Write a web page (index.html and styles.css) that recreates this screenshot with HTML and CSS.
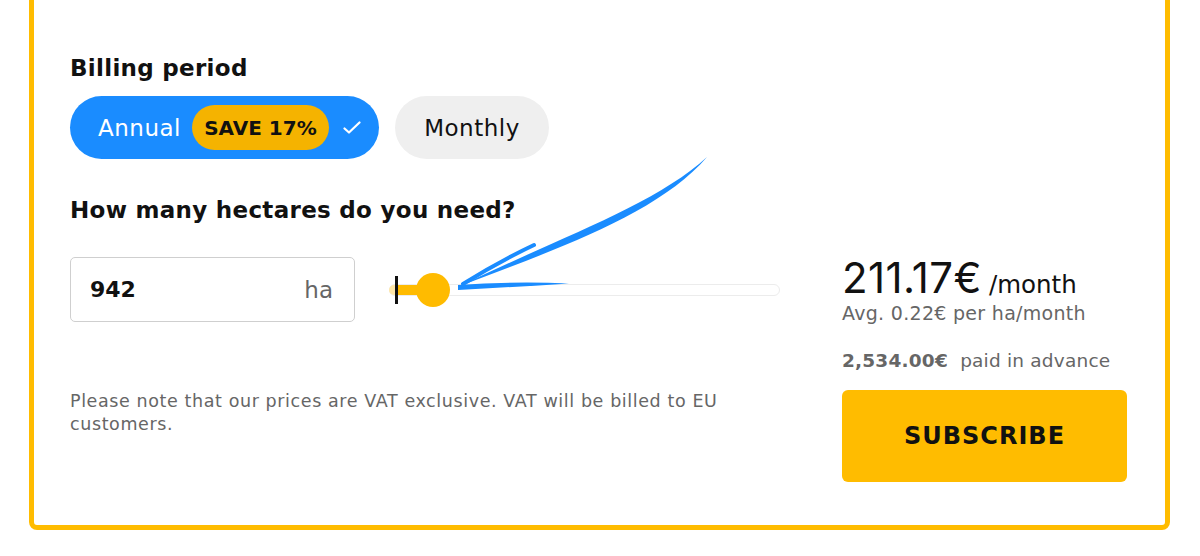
FILE: index.html
```html
<!DOCTYPE html>
<html lang="en">
<head>
<meta charset="utf-8">
<title>Pricing</title>
<link rel="stylesheet" href="styles.css">
</head>
<body>
<div class="card">
  <div class="top">
    <h2 class="heading">Billing period</h2>
    <div class="pills">
      <button class="pill pill-active">
        <span class="pill-label">Annual</span>
        <span class="badge">SAVE 17%</span>
        <svg class="check" width="18" height="14" viewBox="0 0 18 14"><path d="M1.5 7.5 L6 11.5 L16.5 1.5" fill="none" stroke="#fff" stroke-width="2.2" stroke-linecap="round" stroke-linejoin="round"/></svg>
      </button>
      <button class="pill pill-plain"><span class="pill-label">Monthly</span></button>
    </div>
    <h2 class="heading heading-2">How many hectares do you need?</h2>
  </div>
  <div class="main">
    <div class="left">
      <div class="input-row">
        <div class="ha-input">
          <span class="ha-value">942</span>
          <span class="ha-unit">ha</span>
        </div>
        <div class="slider">
          <div class="track"></div>
          <div class="fill-light"></div>
          <div class="fill"></div>
          <div class="marker"></div>
          <div class="thumb"></div>
        </div>
      </div>
      <p class="note">Please note that our prices are VAT exclusive. VAT will be billed to EU customers.</p>
    </div>
    <div class="right">
      <div class="price"><span class="amount">211.17€</span><span class="per">/month</span></div>
      <div class="avg">Avg. 0.22€ per ha/month</div>
      <div class="advance"><strong>2,534.00€</strong>&nbsp; paid in advance</div>
      <button class="subscribe">SUBSCRIBE</button>
    </div>
  </div>
  <svg class="arrow" viewBox="29 -20 1141 550" width="1141" height="550">
    <path d="M707,157 C654,206 553,240 460,286 C557,249 658,214 707,157 Z" fill="#1a8cff"/>
    <path d="M534,245 Q498,262 463,284" fill="none" stroke="#1a8cff" stroke-width="4" stroke-linecap="round"/>
    <path d="M458,285 Q515,281 569,283.5 Q515,287 458,290 Z" fill="#1a8cff"/>
  </svg>
</div>
</body>
</html>
```

FILE: styles.css
```css
* { box-sizing: border-box; }
html, body { margin: 0; padding: 0; background: #fff; }
body {
  font-family: "DejaVu Sans", Inter, sans-serif;
  color: #111;
  width: 1200px;
  height: 556px;
  overflow: hidden;
}
.card {
  position: relative;
  margin: -20px 0 0 29px;
  width: 1141px;
  height: 550px;
  border: 5px solid #ffbc00;
  border-radius: 8px;
  padding: 69px 38px 0 36px;
}
.heading {
  margin: 0;
  font-size: 23px;
  line-height: 28px;
  font-weight: 700;
  letter-spacing: 0.3px;
  color: #111;
}
.heading-2 { margin-top: 37px; }
.pills {
  display: flex;
  gap: 16px;
  margin-top: 14px;
}
.pill {
  display: flex;
  align-items: center;
  height: 63px;
  border: none;
  border-radius: 32px;
  font-family: inherit;
  font-size: 23px;
  padding: 0 29px;
  cursor: pointer;
}
.pill-active {
  background: #1a8cff;
  color: #fff;
  padding: 0 16px 0 28px;
  width: 309px;
}
.pill-plain {
  background: #efefef;
  color: #111;
  width: 154px;
  justify-content: center;
  padding: 0;
}
.pill-label { letter-spacing: 0.5px; }
.badge {
  display: flex;
  align-items: center;
  justify-content: center;
  margin-left: 11px;
  width: 137px;
  height: 45px;
  border-radius: 23px;
  background: #f5b300;
  color: #111;
  font-weight: 700;
  font-size: 20px;
}
.check { margin-left: 14px; }
.main {
  display: grid;
  grid-template-columns: 1fr 285px;
  column-gap: 60px;
  margin-top: 33px;
}
.input-row {
  display: flex;
  align-items: center;
  gap: 34px;
}
.ha-input {
  display: flex;
  align-items: center;
  justify-content: space-between;
  width: 285px;
  height: 65px;
  border: 1.5px solid #cfcfcf;
  border-radius: 5px;
  padding: 0 21px 0 19px;
}
.ha-value { font-size: 22px; font-weight: 700; }
.ha-unit { font-size: 23px; color: #666; }
.slider {
  position: relative;
  width: 391px;
  height: 34px;
}
.track {
  position: absolute;
  left: 0; right: 0; top: 11px;
  height: 12px;
  border: 1.5px solid #ececec;
  border-radius: 6px;
  background: #fff;
}
.fill-light {
  position: absolute;
  left: 0; top: 12px;
  width: 9px; height: 10px;
  border-radius: 5px 0 0 5px;
  background: #ffe7a8;
}
.fill {
  position: absolute;
  left: 8px; top: 12px;
  width: 40px; height: 10px;
  background: #ffbb00;
}
.marker {
  position: absolute;
  left: 6px; top: 3px;
  width: 3px; height: 28px;
  background: #111;
}
.thumb {
  position: absolute;
  left: 27px; top: 0;
  width: 34px; height: 34px;
  border-radius: 50%;
  background: #ffbb00;
}
.note {
  margin: 68px 0 0;
  max-width: 690px;
  font-size: 17.5px;
  line-height: 23px;
  letter-spacing: 0.6px;
  color: #666;
}
.right { display: flex; flex-direction: column; }
.price { height: 42px; line-height: 42px; white-space: nowrap; }
.amount {
  font-family: Inter, "DejaVu Sans", sans-serif;
  font-size: 42px;
  letter-spacing: 0.4px;
  margin-right: 7px;
}
.per { font-size: 24.5px; }
.avg {
  margin-top: 2px;
  font-size: 19px;
  line-height: 24px;
  letter-spacing: 0.3px;
  color: #666;
}
.advance {
  margin-top: 24px;
  font-size: 18.5px;
  line-height: 24px;
  letter-spacing: 0.2px;
  color: #666;
}
.advance strong { font-weight: 700; }
.subscribe {
  margin-top: 17px;
  height: 92px;
  width: 285px;
  border: none;
  border-radius: 6px;
  background: #ffbc00;
  color: #111;
  font-family: inherit;
  font-size: 24px;
  font-weight: 700;
  letter-spacing: 1px;
  cursor: pointer;
}
.arrow {
  position: absolute;
  left: -5px;
  top: -5px;
  pointer-events: none;
}
```
